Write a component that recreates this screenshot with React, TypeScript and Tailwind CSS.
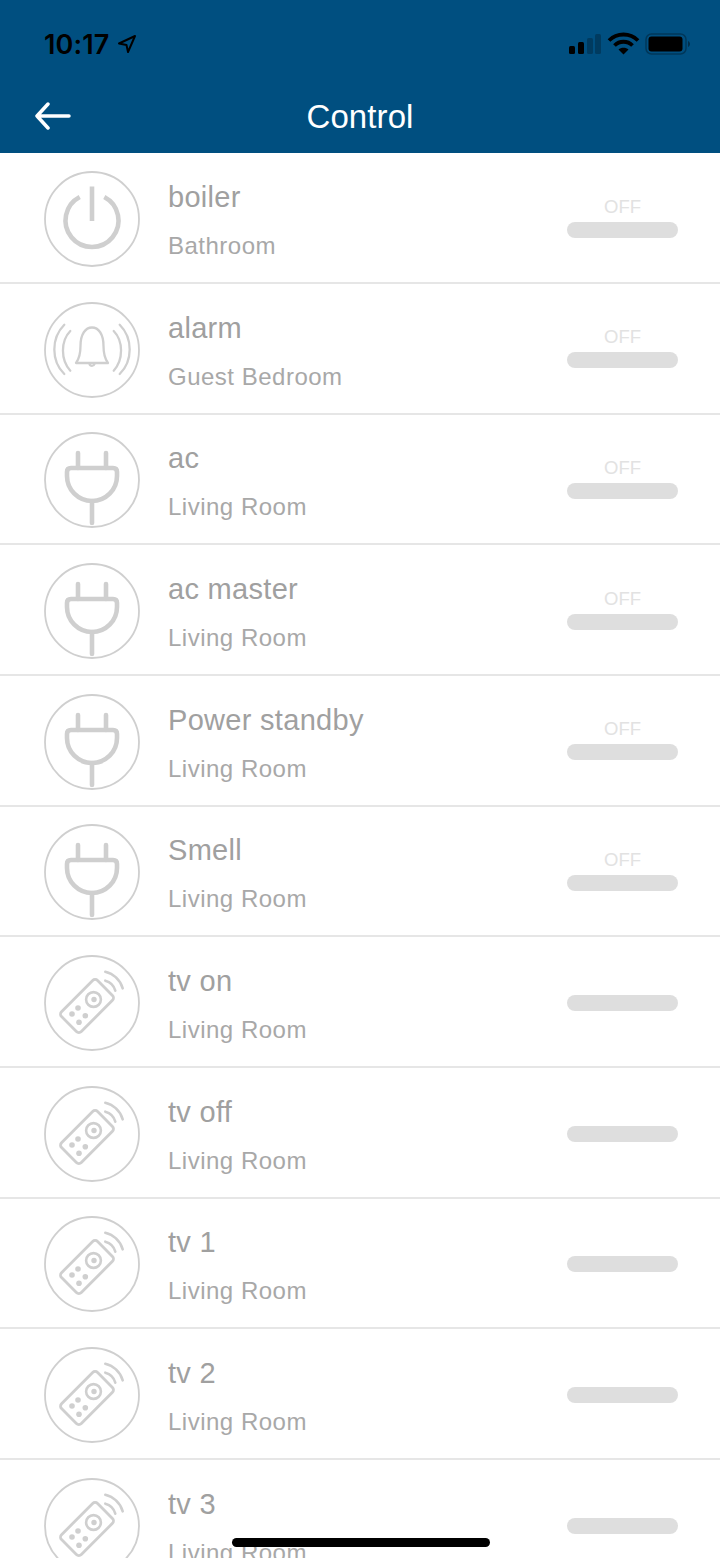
import React from 'react';

type Kind = 'power' | 'bell' | 'plug' | 'remote';

const devices: { name: string; room: string; kind: Kind; off: boolean }[] = [
  { name: 'boiler', room: 'Bathroom', kind: 'power', off: true },
  { name: 'alarm', room: 'Guest Bedroom', kind: 'bell', off: true },
  { name: 'ac', room: 'Living Room', kind: 'plug', off: true },
  { name: 'ac master', room: 'Living Room', kind: 'plug', off: true },
  { name: 'Power standby', room: 'Living Room', kind: 'plug', off: true },
  { name: 'Smell', room: 'Living Room', kind: 'plug', off: true },
  { name: 'tv on', room: 'Living Room', kind: 'remote', off: false },
  { name: 'tv off', room: 'Living Room', kind: 'remote', off: false },
  { name: 'tv 1', room: 'Living Room', kind: 'remote', off: false },
  { name: 'tv 2', room: 'Living Room', kind: 'remote', off: false },
  { name: 'tv 3', room: 'Living Room', kind: 'remote', off: false },
];

function DeviceIcon({ kind }: { kind: Kind }) {
  return (
    <svg viewBox="0 0 96 96" fill="none" stroke="#cfcfcf" strokeLinecap="round" strokeLinejoin="round" className="w-[96px] h-[96px] shrink-0">
      <circle cx="48" cy="48" r="47" strokeWidth="1.800" />
      {kind === 'power' && (
        <g strokeWidth="4.600">
          <path d="M48 15.500v34.500" strokeLinecap="butt" />
          <path d="M35.700 26A26.500 26.500 0 1 0 60.300 26" strokeLinecap="butt" />
        </g>
      )}
      {kind === 'bell' && (
        <g strokeWidth="2.300">
          <path d="M32 61c3-4 4.500-9 4.500-17 0-12 5-18.500 11.500-18.500S59.500 32 59.500 44c0 8 1.500 13 4.500 17Z" />
          <path d="M45.500 62a2.600 2.600 0 0 0 5 0" />
          <path d="M26.300 29C16.500 39 16.500 58 26.300 68.700" />
          <path d="M20.300 22.700C7 36 7 59 20.300 72" />
          <path d="M69.700 29C79.500 39 79.500 58 69.700 68.700" />
          <path d="M75.700 22.700C89 36 89 59 75.700 72" />
        </g>
      )}
      {kind === 'plug' && (
        <g strokeWidth="4.600">
          <path d="M34 21v15M62 21v15" />
          <path d="M27 36H69Q73 36 73 40V44A25 25 0 0 1 23 44V40Q23 36 27 36Z" />
          <path d="M48 69v22" />
        </g>
      )}
      {kind === 'remote' && (
        <g>
          <rect x="-25.500" y="-14" width="51" height="28" rx="3.500" transform="translate(43 51) rotate(-45)" strokeWidth="2.800" />
          <circle cx="49.500" cy="44.500" r="7.400" strokeWidth="2.600" />
          <g fill="#cfcfcf" stroke="none">
            <circle cx="50" cy="44.500" r="2.700" />
            <circle cx="34" cy="53" r="2.800" />
            <circle cx="28" cy="59" r="2.800" />
            <circle cx="41.300" cy="60.700" r="2.800" />
            <circle cx="35" cy="67.300" r="2.800" />
          </g>
          <path d="M61.300 25.700A14 14 0 0 1 71.300 35.700" strokeWidth="2.600" />
          <path d="M61.300 16.700A24 24 0 0 1 78.700 33.300" strokeWidth="2.600" />
        </g>
      )}
    </svg>
  );
}

function DeviceRow({ name, room, kind, off }: { name: string; room: string; kind: Kind; off: boolean }) {
  return (
    <div className="flex items-center h-[130.67px] shrink-0 border-b-2 border-[#e6e6e6] pt-[3px] pl-[44px] pr-[42px]">
      <DeviceIcon kind={kind} />
      <div className="flex-1 pl-[28px] pt-[5px]">
        <div className="text-[29px] leading-[40px] tracking-[0.3px] text-[#a0a0a0]">{name}</div>
        <div className="text-[24px] leading-[40px] mt-[9px] tracking-[0.5px] text-[#a8a8a8]">{room}</div>
      </div>
      <div className={off ? 'flex flex-col items-center w-[111px] pb-[4px]' : 'flex flex-col items-center w-[111px]'}>
        {off && <div className="text-[18.500px] leading-[20px] text-[#e2e2e2] mb-[5px]">OFF</div>}
        <div className="w-full h-[16px] rounded-full bg-[#dedede]" />
      </div>
    </div>
  );
}

function StatusIcons() {
  return (
    <svg viewBox="0 0 124 24" className="w-[124px] h-[24px]">
      <rect x="1" y="14" width="6" height="8" rx="1.500" fill="#000" />
      <rect x="10" y="10" width="6" height="12" rx="1.500" fill="#000" />
      <rect x="19" y="6" width="6" height="16" rx="1.500" fill="#000" fillOpacity="0.25" />
      <rect x="27" y="2" width="6" height="20" rx="1.500" fill="#000" fillOpacity="0.25" />
      <path d="M41 8.500C49 .500 62 .500 70 8.500" stroke="#000" strokeWidth="3.800" fill="none" />
      <path d="M46.500 13.500C51.500 8.500 59.500 8.500 64.500 13.500" stroke="#000" strokeWidth="3.800" fill="none" />
      <path d="M50.500 17.500C53 15 58 15 60.500 17.500L55.500 22.500Z" fill="#000" />
      <rect x="78" y="2" width="40" height="20" rx="5.500" fill="none" stroke="#000" strokeOpacity="0.3" strokeWidth="1.500" />
      <rect x="80.500" y="4.500" width="34" height="15" rx="3" fill="#000" />
      <path d="M120 9v6c1.200-.5 2-1.700 2-3s-.8-2.500-2-3Z" fill="#000" fillOpacity="0.4" />
    </svg>
  );
}

export default function App() {
  return (
    <div className="relative flex flex-col w-[720px] h-[1558px] overflow-hidden bg-white font-['Liberation_Sans',sans-serif]">
      <header className="h-[153.300px] shrink-0 bg-[#004f80]">
        {/* status bar */}
        <div className="flex items-center justify-between h-[40px] mt-[24px] pl-[44px] pr-[28px]">
          <div className="flex items-center gap-[8px]">
            <span className="text-[27px] font-semibold leading-none tracking-[0.1px] text-black font-['Inter',sans-serif]">10:17</span>
            <svg viewBox="0 0 20 20" className="w-[20px] h-[20px]" fill="none" stroke="#000" strokeWidth="2" strokeLinejoin="round">
              <path d="M2 9.500 18 2l-7 16-1.500-7Z" />
            </svg>
          </div>
          <StatusIcons />
        </div>
        {/* nav */}
        <div className="relative flex items-center justify-center h-[56px] mt-[24px]">
          <svg viewBox="0 0 36 28" className="absolute left-[35px] top-[14px] w-[36px] h-[28px]" fill="none" stroke="#fff" strokeWidth="3.500" strokeLinecap="round" strokeLinejoin="round">
            <path d="M34 14H2M13 2 2 14l11 12" />
          </svg>
          <span className="text-[33px] leading-none tracking-[0.1px] text-white">Control</span>
        </div>
      </header>
      <div className="flex flex-col">
        {devices.map((d) => (
          <DeviceRow key={d.name} {...d} />
        ))}
      </div>
      <div className="absolute left-[232px] bottom-[11px] w-[258px] h-[9px] rounded-full bg-black" />
    </div>
  );
}
